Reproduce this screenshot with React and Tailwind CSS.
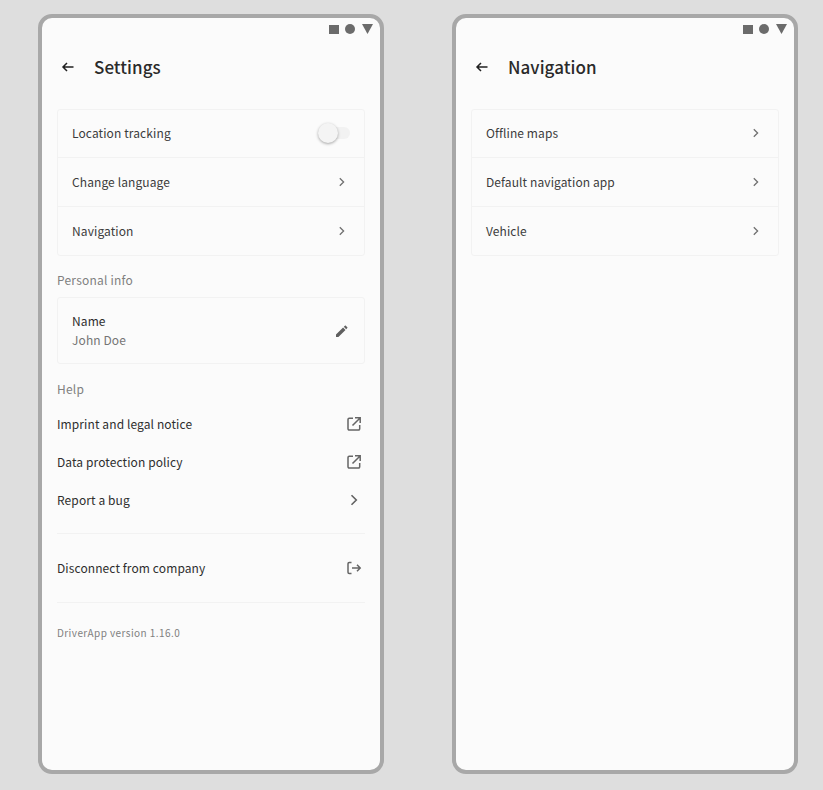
import React from "react";

function Chevron() {
  return (
    <svg width="24" height="24" viewBox="0 0 24 24" fill="none" stroke="#707070" strokeWidth="1.3">
      <path d="M9.8 8.2 13.6 12l-3.8 3.8" />
    </svg>
  );
}
function BigChevron() {
  return (
    <svg width="24" height="24" viewBox="0 0 24 24" fill="none" stroke="#616161" strokeWidth="1.6">
      <path d="M9.5 7.2 14.3 12l-4.8 4.8" />
    </svg>
  );
}
function Arrow() {
  return (
    <svg width="24" height="24" viewBox="0 0 24 24" fill="none" stroke="#212121" strokeWidth="1.5">
      <path d="M17.5 12H7M11 8 7 12l4 4" />
    </svg>
  );
}
function External() {
  return (
    <svg width="24" height="24" viewBox="0 0 24 24" fill="none" stroke="#666" strokeWidth="1.5">
      <path d="M11 6.3H7.2A1.2 1.2 0 0 0 6 7.5v9.3A1.2 1.2 0 0 0 7.2 18h9.3a1.2 1.2 0 0 0 1.2-1.2V13" />
      <path d="M10.5 13.5 17.8 6.2M13 5.8h5.2V11" />
    </svg>
  );
}
function Logout() {
  return (
    <svg width="24" height="24" viewBox="0 0 24 24" fill="none" stroke="#666" strokeWidth="1.5">
      <path d="M9.5 6.5H7.2A1.2 1.2 0 0 0 6 7.7v8.6a1.2 1.2 0 0 0 1.2 1.2h2.3" />
      <path d="M10 12h8M15 8.8l3.2 3.2-3.2 3.2" />
    </svg>
  );
}
function Pencil() {
  return (
    <svg width="24" height="24" viewBox="0 0 24 24" fill="#5f5f5f">
      <path d="M6 15.6V18h2.4l7.1-7.1-2.4-2.4L6 15.6Zm11.3-6.5c.3-.3.3-.7 0-.9l-1.5-1.5c-.3-.3-.7-.3-.9 0l-1.1 1.1 2.4 2.4 1.1-1.1Z" />
    </svg>
  );
}

function StatusBar() {
  return (
    <div className="flex h-[22px] items-center justify-end gap-[6px] pr-[7px]">
      <div className="h-[9px] w-[10px] bg-[#6b6b6b]" />
      <div className="h-[10px] w-[10px] rounded-full bg-[#6b6b6b]" />
      <svg width="11" height="10" viewBox="0 0 11 10" className="ml-[1px]"><path d="M0 0h11L5.5 10Z" fill="#6b6b6b" /></svg>
    </div>
  );
}

function Header({ title }) {
  return (
    <div className="mt-[15px] flex h-[24px] items-center pl-[14px]">
      <Arrow />
      <div className="ml-[14px] text-[17px] font-medium leading-[24px] tracking-[0.05px] text-[#2a2a2a]">{title}</div>
    </div>
  );
}

function CardRow({ label, right, h = "h-[49px]", last }) {
  return (
    <div className={"flex items-center justify-between pl-[14px] pr-[10px] " + h + " " + (last ? "" : "border-b border-[#f2f2f2]")}>
      <span className="text-[12px] tracking-[0.1px] text-[#3c3c3c]">{label}</span>
      {right}
    </div>
  );
}

function Toggle() {
  return (
    <div className="relative mr-[4px] h-[12px] w-[32px] rounded-full bg-[#f2f2f2]">
      <div className="absolute left-0 top-[-4px] h-[20px] w-[20px] rounded-full bg-[#f4f4f4] shadow-[0_1px_3px_rgba(0,0,0,0.35)]" />
    </div>
  );
}

function Card({ children, className = "" }) {
  return <div className={"rounded-[3px] border border-[#f2f2f2] " + className}>{children}</div>;
}

function PlainRow({ label, icon }) {
  return (
    <div className="flex h-[38px] items-center justify-between">
      <span className="text-[12px] tracking-[0.1px] text-[#2e2e2e]">{label}</span>
      <span className="mr-[-1px]">{icon}</span>
    </div>
  );
}

function Phone({ children }) {
  return (
    <div className="h-[760px] w-[346px] overflow-hidden rounded-[14px] border-4 border-[#a8a8a8] bg-[#fbfbfb]">
      <StatusBar />
      {children}
    </div>
  );
}

function Rows({ labels }) {
  return (
    <Card>
      <CardRow h="h-[48px] pb-[2px]" {...labels[0]} />
      <CardRow {...labels[1]} />
      <CardRow h="h-[48px]" {...labels[2]} last />
    </Card>
  );
}

export default function App() {
  return (
    <div
      className="flex h-[790px] w-[823px] gap-[68px] bg-[#dedede] pl-[38px] pt-[14px]"
      style={{ fontFamily: '"Noto Sans CJK JP", "Noto Sans", sans-serif' }}
    >
      <Phone>
        <Header title="Settings" />
        <div className="mt-[30px] px-[15px]">
          <Rows
            labels={[
              { label: "Location tracking", right: <Toggle /> },
              { label: "Change language", right: <Chevron /> },
              { label: "Navigation", right: <Chevron /> },
            ]}
          />
          <div className="mt-[14px] h-[20px] text-[12px] leading-[20px] tracking-[0.2px] text-[#808080]">Personal info</div>
          <Card className="mt-[7px]">
            <div className="flex h-[65px] items-center justify-between pl-[14px] pr-[10px]">
              <div className="pb-[2px]">
                <div className="text-[12px] leading-[19px] tracking-[0.1px] text-[#2e2e2e]">Name</div>
                <div className="text-[12px] leading-[19px] tracking-[0.1px] text-[#757575]">John Doe</div>
              </div>
              <Pencil />
            </div>
          </Card>
          <div className="mt-[15px] h-[20px] text-[12px] leading-[20px] tracking-[0.2px] text-[#808080]">Help</div>
          <div className="mt-[6px]">
            <PlainRow label="Imprint and legal notice" icon={<External />} />
            <PlainRow label="Data protection policy" icon={<External />} />
            <PlainRow label="Report a bug" icon={<BigChevron />} />
          </div>
          <div className="mt-[14px] border-t border-[#f2f2f2]" />
          <div className="flex h-[68px] items-center justify-between">
            <span className="text-[12px] tracking-[0.1px] text-[#2e2e2e]">Disconnect from company</span>
            <span className="mr-[-1px]"><Logout /></span>
          </div>
          <div className="border-t border-[#f2f2f2]" />
          <div className="mt-[21px] text-[10px] leading-[18px] tracking-[0.43px] text-[#808080]">DriverApp version 1.16.0</div>
        </div>
      </Phone>
      <Phone>
        <Header title="Navigation" />
        <div className="mt-[30px] px-[15px]">
          <Rows
            labels={[
              { label: "Offline maps", right: <Chevron /> },
              { label: "Default navigation app", right: <Chevron /> },
              { label: "Vehicle", right: <Chevron /> },
            ]}
          />
        </div>
      </Phone>
    </div>
  );
}
